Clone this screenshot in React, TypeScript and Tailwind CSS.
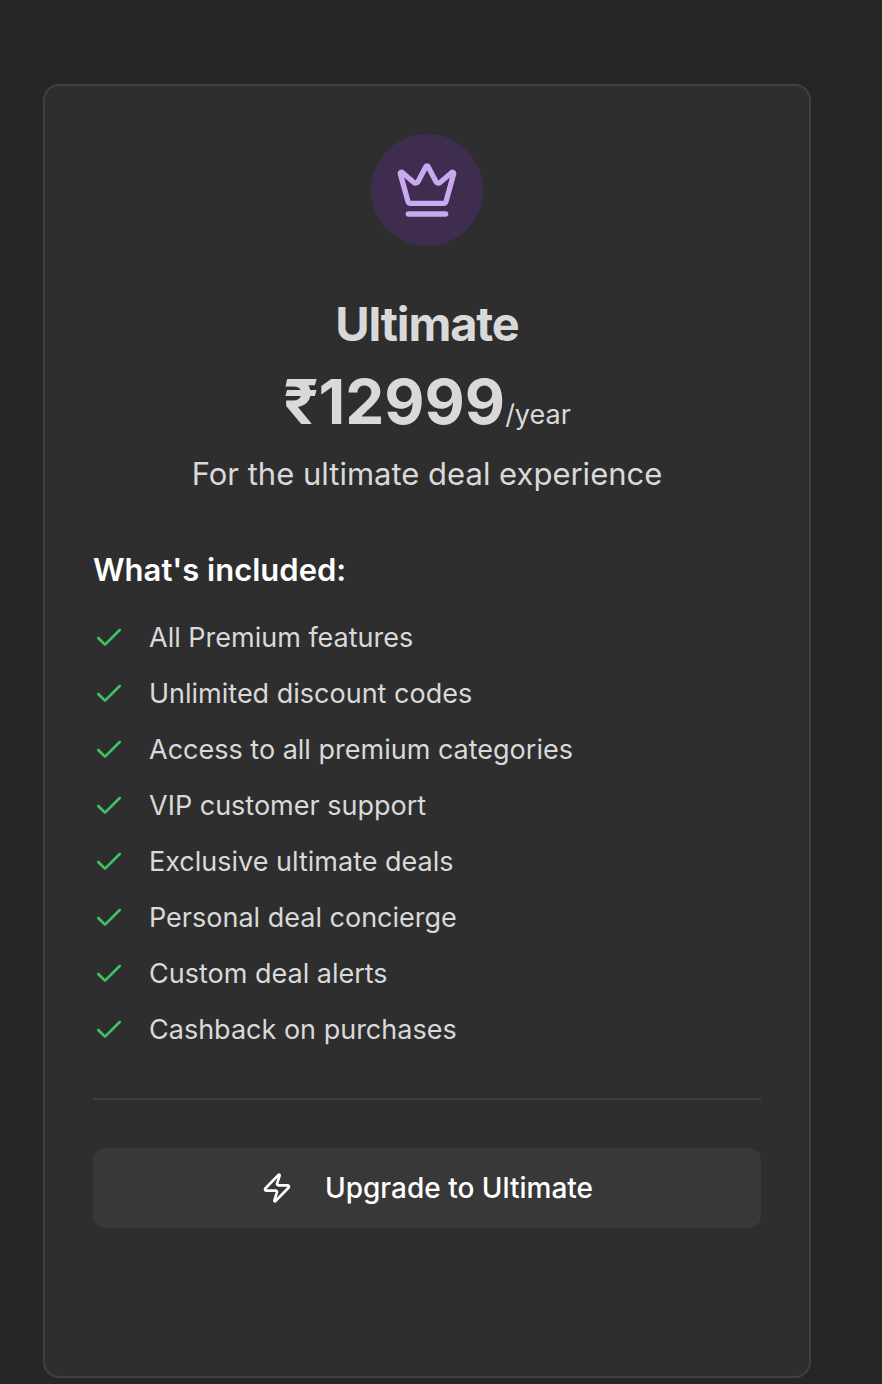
import { Check, Crown, Zap } from "lucide-react";

const features: string[] = [
  "All Premium features",
  "Unlimited discount codes",
  "Access to all premium categories",
  "VIP customer support",
  "Exclusive ultimate deals",
  "Personal deal concierge",
  "Custom deal alerts",
  "Cashback on purchases",
];

function PlanHeader() {
  return (
    <header className="flex flex-col items-center text-center text-[#d9d9d9]">
      <div className="flex size-28 items-center justify-center rounded-full bg-[#3f2d50]">
        <Crown className="size-16 text-[#c9a9f0]" strokeWidth={2} aria-hidden="true" />
      </div>
      <h2 className="mt-12 text-[47px] leading-[60px] font-bold tracking-tight">Ultimate</h2>
      <p className="mt-2 flex items-baseline">
        <span className="text-[62px] leading-[80px] font-bold">₹12999</span>
        <span className="text-[27px] leading-none">/year</span>
      </p>
      <p className="mt-2 text-[31px] leading-[48px]">For the ultimate deal experience</p>
    </header>
  );
}

function FeatureList() {
  return (
    <section className="mt-12">
      <h3 className="text-[31px] leading-[48px] font-semibold text-white">What's included:</h3>
      <ul className="mt-6 flex flex-col gap-4">
        {features.map((feature) => (
          <li key={feature} className="flex items-center gap-6 text-[27px] leading-10 text-[#d9d9d9]">
            <Check className="size-8 shrink-0 text-[#3bc466]" strokeWidth={2} aria-hidden="true" />
            <span>{feature}</span>
          </li>
        ))}
      </ul>
    </section>
  );
}

export default function App() {
  return (
    <main className="min-h-screen bg-[#262626] pt-21 pr-[71px] pb-1.5 pl-[43px] font-['Inter','Liberation_Sans',sans-serif]">
      <article className="rounded-2xl border-2 border-[#404040] bg-[#2e2e2e] px-12 pt-12 pb-37">
        <PlanHeader />
        <FeatureList />
        <hr className="mt-12 border-t-2 border-[#404040]" />
        <button
          type="button"
          className="mt-12 flex h-20 w-full items-center justify-center gap-8 rounded-xl bg-[#383838] text-[28px] leading-10 font-medium text-white"
        >
          <Zap className="size-8 shrink-0" strokeWidth={2} aria-hidden="true" />
          Upgrade to Ultimate
        </button>
      </article>
    </main>
  );
}
